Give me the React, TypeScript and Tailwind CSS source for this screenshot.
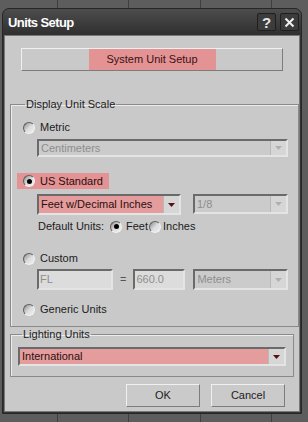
import React from "react";

const font = { fontFamily: '"Liberation Sans", Arial, sans-serif' };

function Radio({ checked = false }: { checked?: boolean }) {
  return (
    <span className="flex h-[12px] w-[12px] shrink-0 items-center justify-center rounded-full border border-t-[#5e5e5e] border-l-[#5e5e5e] border-r-[#f2f2f2] border-b-[#f2f2f2] bg-gradient-to-br from-[#8e8e8e] via-[#dcdcdc] to-[#f0f0f0]">
      {checked && <span className="h-[5px] w-[5px] rounded-full bg-black" />}
    </span>
  );
}

function Arrow({ active = false }: { active?: boolean }) {
  return (
    <span className="flex h-full w-[16px] shrink-0 items-center justify-center border-l border-[#b8b8b8] bg-[#d6d6d6]">
      <svg width="7" height="4" viewBox="0 0 7 4">
        <path d="M0 0h7L3.5 4z" fill={active ? "#5a1010" : "#b0b0b0"} />
      </svg>
    </span>
  );
}

function Select({
  label,
  className,
  active = false,
  red = false,
}: {
  label: string;
  className: string;
  active?: boolean;
  red?: boolean;
}) {
  return (
    <div
      className={`flex items-center border-2 border-t-[#6a6a6a] border-l-[#6a6a6a] border-r-[#e4e4e4] border-b-[#e4e4e4] ${
        red ? "bg-[#e59c9c]" : "bg-[#cbcbcb]"
      } ${className}`}
    >
      <span className={`flex-1 truncate pl-[2px] text-[11px] leading-[13px] ${active ? "text-[#2a1010]" : "text-[#8e8e8e]"}`}>
        {label}
      </span>
      <Arrow active={active} />
    </div>
  );
}

export default function App() {
  return (
    <div className="relative h-[422px] w-[308px] overflow-hidden bg-[#5d5d5d] text-[11px] leading-[13px]" style={font}>
      {/* desktop grid lines behind the dialog */}
      {[57, 128, 200, 271].map((x) => (
        <div key={x} className="absolute top-0 h-full w-px bg-[#3e3e3e]" style={{ left: x }} />
      ))}

      <div className="relative ml-[2px] mt-[8px] w-[300px] overflow-hidden rounded-t-[7px] border border-[#262626] bg-[#333]">
        {/* title bar */}
        <div className="flex h-[26px] items-center justify-between bg-gradient-to-b from-[#4d4d4d] to-[#2f2f2f] pl-[5px] pr-[2px]">
          <span className="text-[13px] font-bold tracking-[-0.6px] text-white">Units Setup</span>
          <div className="flex gap-[4px]">
            <span className="flex h-[18px] w-[19px] items-center justify-center rounded-[2px] border border-[#1f1f1f] bg-[#3c3c3c] text-[15px] font-bold text-[#e6e6e6]">
              ?
            </span>
            <span className="flex h-[18px] w-[19px] items-center justify-center rounded-[2px] border border-[#1f1f1f] bg-[#3c3c3c]">
              <svg width="11" height="11" viewBox="0 0 11 11">
                <path d="M1.5 1.5l8 8M9.5 1.5l-8 8" stroke="#f2f2f2" strokeWidth="2" />
              </svg>
            </span>
          </div>
        </div>

        {/* body */}
        <div className="mx-[1px] mb-[1px] h-[377px] border border-[#777] bg-[#c9c9c9] px-[5px] pt-[12px]">
          <div className="mx-[11px] flex h-[23px] items-center justify-center border border-t-[#f0f0f0] border-l-[#f0f0f0] border-r-[#7c7c7c] border-b-[#7c7c7c] bg-[#c9c9c9]">
            <span className="flex h-full w-[127px] items-center justify-center bg-[#e39394] text-[#3a1212]">
              System Unit Setup
            </span>
          </div>

          <fieldset className="mt-[27px] border border-[#8a8a8a] px-[10px] pb-[10px] shadow-[inset_1px_1px_0_#ececec]">
            <legend className="ml-[4px] px-[1px] text-[#1c1c1c]">Display Unit Scale</legend>

            <div className="mt-[10px] flex h-[13px] items-center gap-[5px] pl-[2px] text-[#1c1c1c]">
              <Radio />
              <span>Metric</span>
            </div>
            <Select label="Centimeters" className="ml-[16px] mt-[5px] h-[18px]" />

            <div className="-ml-[4px] mt-[16px] flex h-[16px] w-[92px] items-center gap-[5px] bg-[#e39394] pl-[6px] text-[#2a0d0d]">
              <Radio checked />
              <span>US Standard</span>
            </div>
            <div className="ml-[16px] mt-[5px] flex gap-[12px]">
              <Select label="Feet w/Decimal Inches" className="h-[21px] w-[144px]" active red />
              <Select label="1/8" className="h-[20px] w-[95px]" />
            </div>
            <div className="ml-[17px] mt-[5px] flex h-[13px] items-center text-[#1c1c1c]">
              <span>Default Units:</span>
              <span className="ml-[6px] flex">
                <Radio checked />
              </span>
              <span className="ml-[4px]">Feet</span>
              <span className="ml-[1px] flex">
                <Radio />
              </span>
              <span className="ml-[2px]">Inches</span>
            </div>

            <div className="mt-[19px] flex h-[13px] items-center gap-[5px] pl-[2px] text-[#1c1c1c]">
              <Radio />
              <span>Custom</span>
            </div>
            <div className="ml-[16px] mt-[4px] flex items-center">
              <div className="flex h-[21px] w-[76px] items-center border-2 border-t-[#6a6a6a] border-l-[#6a6a6a] border-r-[#e4e4e4] border-b-[#e4e4e4] bg-[#dcdcdc] pl-[1px] text-[#8e8e8e]">
                FL
              </div>
              <span className="mx-[7px] text-[#555]">=</span>
              <div className="flex h-[21px] w-[52px] items-center border-2 border-t-[#6a6a6a] border-l-[#6a6a6a] border-r-[#e4e4e4] border-b-[#e4e4e4] bg-[#dcdcdc] pl-[1px] text-[#8e8e8e]">
                660.0
              </div>
              <Select label="Meters" className="ml-[8px] h-[21px] w-[95px]" />
            </div>

            <div className="mt-[13px] flex h-[13px] items-center gap-[5px] pl-[2px] text-[#1c1c1c]">
              <Radio />
              <span>Generic Units</span>
            </div>
          </fieldset>

          <fieldset className="mt-[1px] border border-[#8a8a8a] px-[7px] pb-[10px] shadow-[inset_1px_1px_0_#ececec]">
            <legend className="ml-[4px] px-[1px] text-[#1c1c1c]">Lighting Units</legend>
            <Select label="International" className="mt-[6px] h-[19px]" active red />
          </fieldset>

          <div className="mt-[7px] flex justify-end gap-[11px] pr-[9px]">
            <button className="h-[23px] w-[74px] border border-t-[#f0f0f0] border-l-[#f0f0f0] border-r-[#7c7c7c] border-b-[#7c7c7c] bg-[#cacaca] text-[#1c1c1c]">
              OK
            </button>
            <button className="h-[23px] w-[74px] border border-t-[#f0f0f0] border-l-[#f0f0f0] border-r-[#7c7c7c] border-b-[#7c7c7c] bg-[#cacaca] text-[#1c1c1c]">
              Cancel
            </button>
          </div>
        </div>
      </div>
    </div>
  );
}
